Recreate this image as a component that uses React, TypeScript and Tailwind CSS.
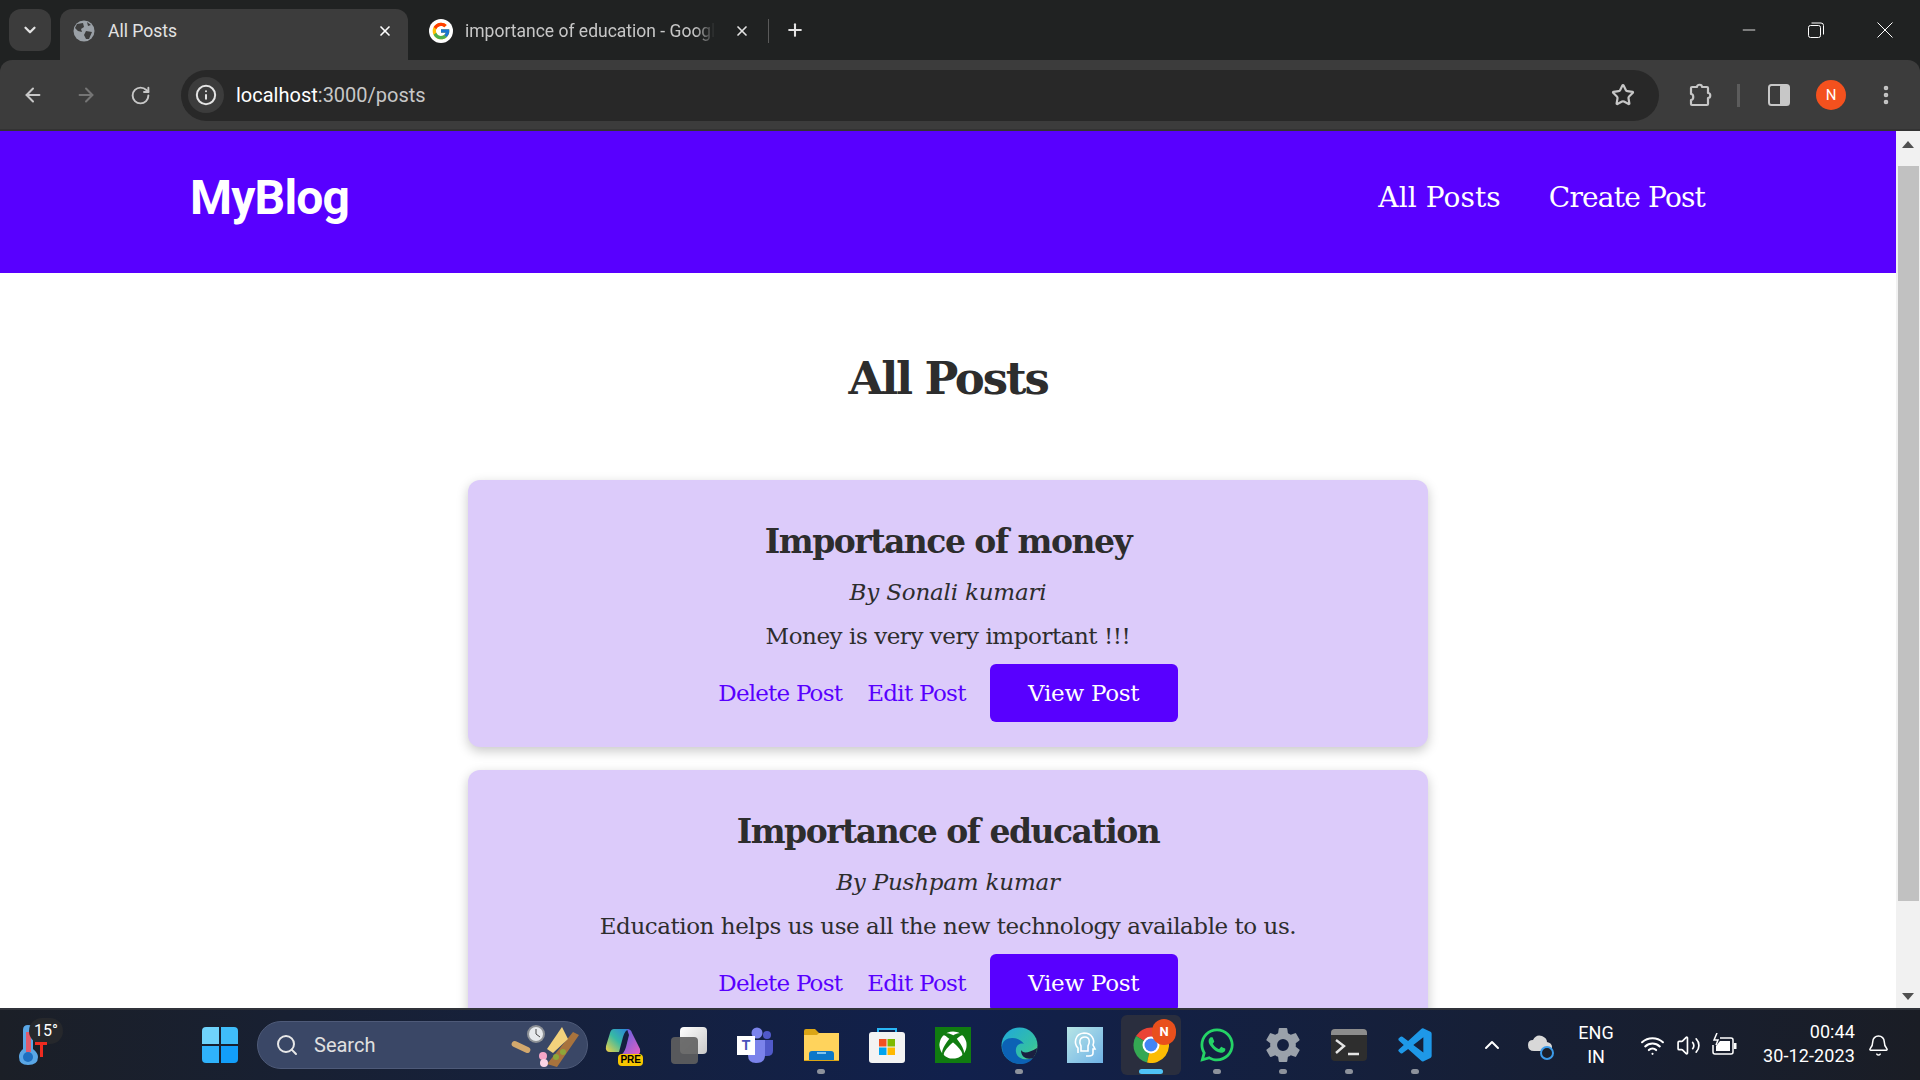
import { ArrowLeft, ArrowRight, ChevronDown, ChevronUp, EllipsisVertical, Info, Plus, RotateCw, Search, Star, Volume2, Wifi, X, Bell, Minus } from "lucide-react";
import { FcGoogle } from "react-icons/fc";
import { FaWhatsapp, FaXbox } from "react-icons/fa";
import { BiLogoVisualStudio } from "react-icons/bi";
import { IoSettingsSharp } from "react-icons/io5";
import type { ReactNode } from "react";

const slab = "font-['DejaVu_Serif',serif]";

const posts = [
  { title: "Importance of money", author: "By Sonali kumari", body: "Money is very very important !!!" },
  { title: "Importance of education", author: "By Pushpam kumar", body: "Education helps us use all the new technology available to us." },
];

function GlobeIcon() {
  return (
    <svg width="22" height="22" viewBox="0 0 22 22">
      <circle cx="11" cy="11" r="10.5" fill="#9aa0a6" />
      <path d="M4 4 L10 3 L11 7 L8 9 L9 12 L5 11 L2 8 Z M13 11 L19 12 L16 19 L13 19 L11 15 Z M14 2 L18 5 L15 6 Z" fill="#3c3c3c" />
    </svg>
  );
}

function ExtensionIcon() {
  return (
    <svg width="26" height="26" viewBox="0 0 26 26" fill="none" stroke="#c7c7c7" strokeWidth="2.2" strokeLinejoin="round" className="ml-[28px]">
      <path d="M5 5 H10 C10 2 15 2 15 5 H20 Q21 5 21 6 V11 C24 11 24 16 21 16 V22 Q21 23 20 23 H5 Q4 23 4 22 V18 C7 18 7 12 4 12 V6 Q4 5 5 5 Z" />
    </svg>
  );
}

function SidePanelIcon() {
  return (
    <svg width="22" height="22" viewBox="0 0 22 22" className="ml-[28px]">
      <rect x="1" y="1" width="20" height="20" rx="2.5" fill="none" stroke="#c7c7c7" strokeWidth="2" />
      <rect x="12" y="1" width="9" height="20" rx="1.5" fill="#c7c7c7" />
    </svg>
  );
}

function BrowserChrome() {
  return (
    <header className="bg-[#202222] h-[131px] flex flex-col shrink-0 font-['Roboto',sans-serif]">
      <div className="h-[60px] flex items-end pl-[9px] text-[17.5px]">
        <div className="w-[42px] h-[42px] mb-[9px] rounded-xl bg-[#3c3c3c] flex items-center justify-center">
          <ChevronDown size={18} strokeWidth={3} className="text-[#e3e3e3]" />
        </div>
        <div className="ml-[9px] w-[348px] h-[51px] bg-[#3c3c3c] rounded-t-xl flex items-center pl-[13px] pr-[15px] pb-[7px]">
          <GlobeIcon />
          <span className="ml-[13px] text-[#e3e3e3] flex-1">All Posts</span>
          <X size={16} strokeWidth={2.5} className="text-white" />
        </div>
        <div className="w-[357px] h-[51px] flex items-center pl-[21px] pr-[15px] pb-[7px]">
          <div className="w-6 h-6 rounded-full bg-white flex items-center justify-center"><FcGoogle size={20} /></div>
          <span className="ml-[12px] text-[#c7c7c7] w-[250px] overflow-hidden whitespace-nowrap [mask-image:linear-gradient(to_right,black_92%,transparent)]">importance of education - Google</span>
          <X size={16} strokeWidth={2.5} className="ml-auto text-[#e3e3e3]" />
        </div>
        <div className="w-px h-6 bg-[#5a5a5a] mb-[17px] ml-[3px]" />
        <Plus size={20} strokeWidth={2.5} className="ml-[16px] mb-[20px] text-[#e3e3e3]" />
        <div className="ml-auto self-start flex items-center h-[60px] text-white">
          <Minus size={20} strokeWidth={1} className="mr-[49px]" />
          <svg width="16" height="16" viewBox="0 0 16 16" fill="none" stroke="white" strokeWidth="1" className="mr-[53px]">
            <rect x="0.5" y="3.5" width="12" height="12" rx="2" />
            <path d="M3.5 1 H13 Q15.5 1 15.5 3.5 V12.5" />
          </svg>
          <svg width="16" height="16" viewBox="0 0 16 16" stroke="white" strokeWidth="1" className="mr-[27px]">
            <path d="M0.5 0.5 L15.5 15.5 M15.5 0.5 L0.5 15.5" />
          </svg>
        </div>
      </div>
      <div className="h-[71px] bg-[#3c3c3c] rounded-t-xl flex items-center pl-[22px] pt-[1px] text-[#c7c7c7] border-b-2 border-[#333333]">
        <ArrowLeft size={22} strokeWidth={2.2} />
        <ArrowRight size={22} strokeWidth={2.2} className="ml-[31px] text-[#757575]" />
        <RotateCw size={21} strokeWidth={2.2} className="ml-[33px]" />
        <div className="ml-[30px] w-[1478px] h-[51px] rounded-full bg-[#282828] flex items-center pl-[7px] pr-[24px]">
          <div className="w-[36px] h-[36px] rounded-full bg-[#3c3c3c] flex items-center justify-center">
            <Info size={22} strokeWidth={2.2} className="text-[#e3e3e3]" />
          </div>
          <span className="ml-[12px] text-[20px] text-white">localhost<span className="text-[#c7c7c7]">:3000/posts</span></span>
          <Star size={24} strokeWidth={2.2} className="ml-auto" />
        </div>
        <ExtensionIcon />
        <div className="ml-[24px] w-[3px] h-[23px] bg-[#5c5c5c]" />
        <SidePanelIcon />
        <div className="ml-[26px] w-[30px] h-[30px] rounded-full bg-[#f4511e] text-white text-[15px] flex items-center justify-center">N</div>
        <EllipsisVertical size={24} strokeWidth={2.6} className="ml-[28px]" />
      </div>
    </header>
  );
}

function PostCard({ title, author, body }: { title: string; author: string; body: string }) {
  return (
    <div className="w-[960px] bg-[#dccbfa] rounded-xl shadow-[0_4px_12px_rgba(0,0,0,0.22)] pt-[39px] pb-[25px] flex flex-col items-center text-[#2d2d2d] shrink-0">
      <h2 className="text-[33px] leading-[46px] font-bold tracking-[-1.5px]">{title}</h2>
      <p className="mt-[10px] text-[23px] leading-[35px] italic tracking-[-0.2px]">{author}</p>
      <p className="mt-[9px] text-[23px] leading-[35px] tracking-[-0.45px]">{body}</p>
      <div className="mt-[10px] flex items-center text-[23px]">
        <a className="text-[#5800ff] tracking-[-0.8px]">Delete Post</a>
        <a className="ml-[25px] text-[#5800ff] tracking-[-0.7px]">Edit Post</a>
        <a className="ml-[24px] w-[188px] h-[58px] rounded-md bg-[#5800ff] text-white flex items-center justify-center tracking-[-0.25px]">View Post</a>
      </div>
    </div>
  );
}

function Scrollbar() {
  return (
    <div className="w-6 shrink-0 bg-[#f1f1f1] flex flex-col items-center">
      <div className="h-[35px] pb-[9px] flex items-center justify-center">
        <div className="w-0 h-0 border-x-[6px] border-x-transparent border-b-[7px] border-b-[#505050]" />
      </div>
      <div className="w-[21px] h-[735px] bg-[#c1c1c1]" />
      <div className="mt-auto h-[24px] flex items-center justify-center">
        <div className="w-0 h-0 border-x-[6px] border-x-transparent border-t-[7px] border-t-[#505050]" />
      </div>
    </div>
  );
}

function TaskIcon({ children, dot, active }: { children: ReactNode; dot?: boolean; active?: boolean }) {
  return (
    <div className={`relative w-[60px] mx-[3px] h-[60px] rounded-md flex items-center justify-center ${active ? "bg-[#2a2e3e]" : ""}`}>
      {children}
      {dot && !active && <div className="absolute bottom-[1px] left-[26px] w-[8px] h-[5px] rounded-full bg-[#8d929c]" />}
      {active && <div className="absolute bottom-[1px] left-[18px] w-[24px] h-[5px] rounded-full bg-[#4fc3f7]" />}
    </div>
  );
}

function WindowsLogo() {
  return (
    <div className="grid grid-cols-2 gap-[2px] w-[36px] h-[36px]">
      <div className="bg-[#6fd3fb] rounded-tl-sm" />
      <div className="bg-[#3fbdfa] rounded-tr-sm" />
      <div className="bg-[#2fb2fb] rounded-bl-sm" />
      <div className="bg-[#129efa] rounded-br-sm" />
    </div>
  );
}

function CopilotIcon() {
  return (
    <div className="relative w-[36px] h-[36px]">
      <svg width="36" height="32" viewBox="0 0 36 32">
        <defs>
          <linearGradient id="cp1" x1="0" y1="1" x2="1" y2="0">
            <stop offset="0" stopColor="#f6d143" />
            <stop offset="0.5" stopColor="#37b9a4" />
            <stop offset="1" stopColor="#2a7fe0" />
          </linearGradient>
          <linearGradient id="cp2" x1="0" y1="0" x2="1" y2="1">
            <stop offset="0" stopColor="#4a62e8" />
            <stop offset="1" stopColor="#e85fc0" />
          </linearGradient>
        </defs>
        <path d="M9 2 H24 Q20 3 18 10 L14 25 H5 Q0 25 1 19 L5 6 Q6 2 9 2 Z" fill="url(#cp1)" />
        <path d="M22 2 Q26 2 27 6 L35 22 Q36 28 31 28 H15 Q19 27 21 20 L24 8 Z" fill="url(#cp2)" />
      </svg>
      <span className="absolute bottom-[-3px] right-[-2px] bg-[#f7c600] text-black text-[10px] font-bold leading-[12px] px-[2px] rounded-sm font-['Liberation_Sans',sans-serif]">PRE</span>
    </div>
  );
}

function TaskViewIcon() {
  return (
    <div className="relative w-[36px] h-[36px]">
      <div className="absolute left-[9px] top-0 w-[27px] h-[27px] rounded-sm bg-gradient-to-br from-white to-[#c9c9c9]" />
      <div className="absolute left-0 top-[10px] w-[27px] h-[27px] rounded-sm bg-[#5f5f5f]/90" />
    </div>
  );
}

function TeamsIcon() {
  return (
    <div className="relative w-[36px] h-[36px]">
      <svg width="36" height="36" viewBox="0 0 36 36">
        <circle cx="20" cy="6" r="5.5" fill="#7b83eb" />
        <circle cx="30" cy="8" r="4" fill="#5059c9" />
        <path d="M24 13 H36 V24 Q36 29 30 29 H24 Z" fill="#5059c9" />
        <path d="M11 13 H28 V28 Q28 36 19 36 Q11 36 11 28 Z" fill="#7b83eb" />
      </svg>
      <div className="absolute left-0 top-[9px] w-[18px] h-[19px] bg-white text-[#4b53bc] text-[14px] font-bold leading-[19px] text-center font-['Liberation_Sans',sans-serif]">T</div>
    </div>
  );
}

function ExplorerIcon() {
  return (
    <svg width="37" height="34" viewBox="0 0 37 34">
      <path d="M1 3 Q1 1 3 1 H12 L16 5 H36 V33 H1 Z" fill="#dba515" />
      <path d="M1 7 H14 L16 5 H36 V32 H1 Z" fill="#ffd35c" />
      <path d="M6 32 V26 Q6 23 9 23 H28 Q31 23 31 26 V32 Z" fill="#0b77c9" />
      <rect x="14" y="24" width="9" height="2" fill="#7fc4f0" />
    </svg>
  );
}

function StoreIcon() {
  return (
    <svg width="36" height="36" viewBox="0 0 36 36">
      <path d="M9 6 V2 H27 V6" fill="none" stroke="#29b6f6" strokeWidth="2" />
      <rect x="0" y="5" width="36" height="31" rx="3" fill="#f3f3f3" />
      <rect x="10" y="12" width="7.5" height="7.5" fill="#f25022" />
      <rect x="18.5" y="12" width="7.5" height="7.5" fill="#7fba00" />
      <rect x="10" y="20.5" width="7.5" height="7.5" fill="#00a4ef" />
      <rect x="18.5" y="20.5" width="7.5" height="7.5" fill="#ffb900" />
    </svg>
  );
}

function EdgeIcon() {
  return (
    <svg width="37" height="37" viewBox="0 0 37 37">
      <defs>
        <linearGradient id="ed1" x1="0" y1="0" x2="1" y2="1">
          <stop offset="0" stopColor="#1fa8dd" />
          <stop offset="0.7" stopColor="#35c1a0" />
          <stop offset="1" stopColor="#7fe06a" />
        </linearGradient>
      </defs>
      <circle cx="18.5" cy="18.5" r="18" fill="url(#ed1)" />
      <path d="M1 20 C1 30 10 37 19 37 C25 37 29 35 32 31 C25 34 16 32 15 25 C14 20 18 15 23 17 C17 8 1 9 1 20 Z" fill="#0c62b5" />
      <path d="M20 23 C22 27 28 26 36 21 C36 25 34 28 32 31 C27 33 20 31 20 23 Z" fill="#1a1f40" />
    </svg>
  );
}

function CopilotAppIcon() {
  return (
    <div className="w-[36px] h-[36px] bg-gradient-to-br from-[#b7e5e5] to-[#6fb2e6] flex items-center justify-center">
      <svg width="24" height="28" viewBox="0 0 24 28" fill="none" stroke="white" strokeWidth="1.6">
        <path d="M5 22 V17 C1 13 1 3 11 2 C19 2 22 9 20 14 L22 18 H20 V22 Q20 25 16 25 H13" />
        <path d="M8 20 V15 C6 12 6 6 12 6 C17 6 17 12 15 15 V20 Z" />
      </svg>
    </div>
  );
}

function ChromeIcon() {
  return (
    <div className="relative w-[36px] h-[36px]">
      <svg width="36" height="36" viewBox="0 0 36 36">
        <path d="M18 18 L3 9 A18 18 0 0 1 33.6 9 Z" fill="#ea4335" />
        <path d="M18 18 L3 9 A18 18 0 0 0 14 35.6 Z" fill="#34a853" />
        <path d="M18 18 L33.6 9 A18 18 0 0 1 14 35.6 Z" fill="#fbbc04" />
        <circle cx="18" cy="18" r="8.5" fill="white" />
        <circle cx="18" cy="18" r="6.5" fill="#4285f4" />
      </svg>
      <div className="absolute right-[-7px] top-[-8px] w-[24px] h-[26px] rounded-full bg-[#e9501c] text-white text-[13px] font-bold flex items-center justify-center font-['Roboto',sans-serif]">N</div>
    </div>
  );
}

function TerminalIcon() {
  return (
    <div className="w-[36px] h-[32px] rounded-sm bg-[#2e2e2e] overflow-hidden">
      <div className="h-[6px] bg-[#8c8c8c]" />
      <svg width="36" height="26" viewBox="0 0 36 26" fill="none" stroke="#e5e5e5" strokeWidth="2.4">
        <path d="M5 5 L13 11 L5 18" />
        <path d="M17 19 H28" />
      </svg>
    </div>
  );
}

function OneDriveIcon() {
  return (
    <div className="relative w-[26px] h-[26px]">
      <svg width="24" height="18" viewBox="0 0 24 18" className="mt-[3px]">
        <path d="M6 17 Q0 17 0 11 Q0 6 5 6 Q8 0 14 2 Q19 4 19 8 Q24 9 24 13 Q24 17 20 17 Z" fill="#d8d8d8" />
      </svg>
      <div className="absolute right-0 bottom-0 w-[14px] h-[14px] rounded-full bg-[#1b1f2a] border-2 border-[#3b9bea]" />
    </div>
  );
}

function BatteryIcon() {
  return (
    <svg width="26" height="24" viewBox="0 0 26 24" fill="none" stroke="white" strokeWidth="1.5">
      <path d="M9 5 H20 Q22 5 22 7 V19 Q22 21 20 21 H4 Q2 21 2 19 V12" />
      <rect x="23" y="10" width="2.5" height="6" fill="white" stroke="none" />
      <path d="M9 8 H19 V18 H5 V13 Z" fill="white" stroke="none" />
      <path d="M6 0 L3 7 H7 L5 12" />
    </svg>
  );
}

function SearchArt() {
  return (
    <svg width="72" height="46" viewBox="0 0 72 46" className="ml-auto">
      <path d="M38 42 L64 10 L70 13 L48 45 Z" fill="#a8733d" />
      <path d="M38 27 L53 5 L59 17 L44 31 Z" fill="#f3d27c" />
      <circle cx="27" cy="12" r="9" fill="#8d9196" />
      <circle cx="27" cy="12" r="7" fill="#e6e9ec" />
      <path d="M27 7 V12 L31 15" fill="none" stroke="#444" strokeWidth="1" />
      <rect x="2" y="22" width="20" height="6" rx="3" fill="#d2a86d" transform="rotate(25 12 25)" />
      <circle cx="34" cy="34" r="4" fill="#f5a6c8" />
      <circle cx="35" cy="41" r="4" fill="#fbd5e5" />
      <circle cx="54" cy="30" r="3" fill="#8ea63a" />
      <circle cx="47" cy="35" r="3" fill="#8ea63a" />
    </svg>
  );
}

function Taskbar() {
  return (
    <footer className="h-[72px] shrink-0 border-t-2 border-[#30333a] bg-gradient-to-r from-[#1b1f27] via-[#11204c] to-[#1a1d25] flex items-center text-white font-['Roboto',sans-serif] relative">
      <div className="relative w-[202px] h-full flex pl-[18px] pt-[14px]">
        <svg width="22" height="42" viewBox="0 0 22 42">
          <path d="M5 6 Q5 1 10 1 Q15 1 15 6 V25 Q20 29 20 33 Q20 41 10 41 Q1 41 1 33 Q1 28 5 25 Z" fill="#5aa7e6" />
          <rect x="8" y="8" width="5" height="20" fill="#e05b6c" />
          <circle cx="10" cy="33" r="5" fill="#1e6fc0" />
        </svg>
        <div className="absolute left-[29px] top-[8px] w-[34px] h-[26px] rounded-full bg-[#26282c] text-[16px] leading-[26px] text-center">15°</div>
        <div className="absolute left-[35px] top-[32px] w-[12px] h-[3px] bg-[#ef2b20]" />
        <div className="absolute left-[40px] top-[32px] w-[3px] h-[15px] bg-[#ef2b20]" />
      </div>
      <WindowsLogo />
      <div className="ml-[19px] w-[331px] h-[48px] rounded-full bg-[#3a4766] border border-[#4e5a78] flex items-center pl-[17px] pr-[6px]">
        <Search size={24} strokeWidth={2} className="text-[#e8e8e8]" />
        <span className="ml-[15px] text-[20px] text-[#e0e0e0]">Search</span>
        <SearchArt />
      </div>
      <div className="ml-[2px] flex items-center">
        <TaskIcon><CopilotIcon /></TaskIcon>
        <TaskIcon><TaskViewIcon /></TaskIcon>
        <TaskIcon><TeamsIcon /></TaskIcon>
        <TaskIcon dot><ExplorerIcon /></TaskIcon>
        <TaskIcon><StoreIcon /></TaskIcon>
        <TaskIcon><div className="w-[36px] h-[36px] bg-[#107c10] flex items-center justify-center"><FaXbox size={28} color="white" /></div></TaskIcon>
        <TaskIcon dot><EdgeIcon /></TaskIcon>
        <TaskIcon><CopilotAppIcon /></TaskIcon>
        <TaskIcon active><ChromeIcon /></TaskIcon>
        <TaskIcon dot><FaWhatsapp size={38} color="#25d366" /></TaskIcon>
        <TaskIcon dot><IoSettingsSharp size={38} color="#9aa1aa" /></TaskIcon>
        <TaskIcon dot><TerminalIcon /></TaskIcon>
        <TaskIcon dot><BiLogoVisualStudio size={40} color="#1e98e8" /></TaskIcon>
      </div>
      <ChevronUp size={24} strokeWidth={2} className="ml-[32px]" />
      <div className="ml-[24px]"><OneDriveIcon /></div>
      <div className="ml-[22px] w-[40px] text-center text-[18px] leading-[24px]">ENG<br />IN</div>
      <Wifi size={25} strokeWidth={2} className="ml-[24px]" />
      <Volume2 size={25} strokeWidth={1.6} className="ml-[11px]" />
      <div className="ml-[10px]"><BatteryIcon /></div>
      <div className="ml-auto pb-[2px] text-right text-[18px] leading-[24px] tracking-[0.1px]">00:44<br />30-12-2023</div>
      <Bell size={23} strokeWidth={1.6} className="ml-[12px] mr-[30px]" />
    </footer>
  );
}

export default function App() {
  return (
    <div className="w-[1920px] h-[1080px] flex flex-col overflow-hidden bg-white">
      <BrowserChrome />
      <div className="flex flex-1 min-h-0">
        <main className="flex-1 min-w-0 overflow-hidden bg-white">
          <nav className="h-[142px] bg-[#5800ff] flex items-center pl-[190px] pr-[191px] pb-[8px] text-white">
            <span className="font-['Roboto',sans-serif] text-[48px] font-bold tracking-[-0.8px]">MyBlog</span>
            <span className={`${slab} ml-auto text-[28px] tracking-[0.1px]`}>All Posts</span>
            <span className={`${slab} ml-[48px] text-[28px] tracking-[-0.8px]`}>Create Post</span>
          </nav>
          <div className={`${slab} flex flex-col items-center`}>
            <h1 className="mt-[76px] text-[45px] leading-[60px] font-bold text-[#2d2d2d] tracking-[-2.2px]">All Posts</h1>
            <div className="mt-[71px] flex flex-col gap-[23px] items-center">
              {posts.map((post) => (
                <PostCard key={post.title} {...post} />
              ))}
            </div>
          </div>
        </main>
        <Scrollbar />
      </div>
      <Taskbar />
    </div>
  );
}
